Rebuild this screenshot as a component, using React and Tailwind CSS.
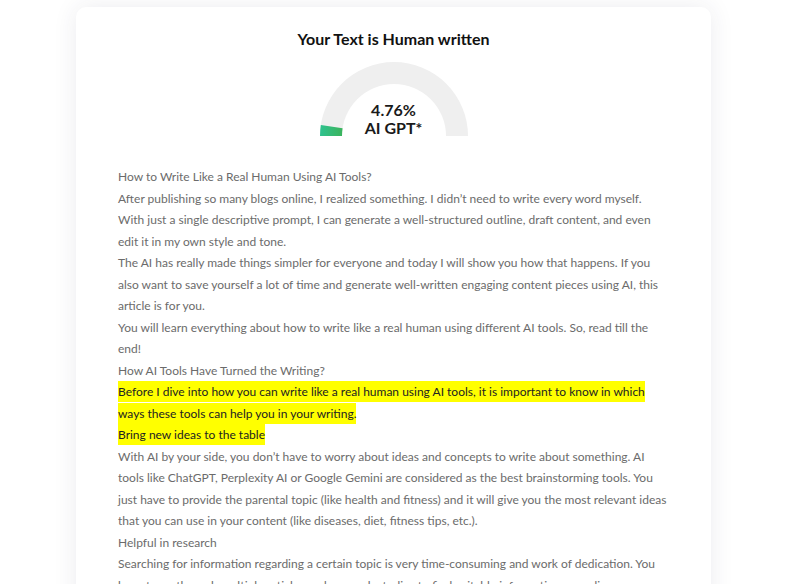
const paragraphs = [
  { text: "How to Write Like a Real Human Using AI Tools?" },
  {
    text: "After publishing so many blogs online, I realized something. I didn’t need to write every word myself. With just a single descriptive prompt, I can generate a well-structured outline, draft content, and even edit it in my own style and tone.",
  },
  {
    text: "The AI has really made things simpler for everyone and today I will show you how that happens. If you also want to save yourself a lot of time and generate well-written engaging content pieces using AI, this article is for you.",
  },
  {
    text: "You will learn everything about how to write like a real human using different AI tools. So, read till the end!",
  },
  { text: "How AI Tools Have Turned the Writing?" },
  {
    text: "Before I dive into how you can write like a real human using AI tools, it is important to know in which ways these tools can help you in your writing.",
    highlight: true,
  },
  { text: "Bring new ideas to the table", highlight: true },
  {
    text: "With AI by your side, you don’t have to worry about ideas and concepts to write about something. AI tools like ChatGPT, Perplexity AI or Google Gemini are considered as the best brainstorming tools. You just have to provide the parental topic (like health and fitness) and it will give you the most relevant ideas that you can use in your content (like diseases, diet, fitness tips, etc.).",
  },
  { text: "Helpful in research" },
  {
    text: "Searching for information regarding a certain topic is very time-consuming and work of dedication. You have to go through multiple articles and research studies to find suitable information regarding your topic.",
  },
];

// half circle gauge, value in percent
const Gauge = ({ value }) => {
  const R = 74;
  const r = 52;
  const cx = 74;
  const cy = 74;
  const a = Math.PI * (1 - value / 100);
  const arc = `M ${cx - R} ${cy} A ${R} ${R} 0 0 1 ${cx + R * Math.cos(a)} ${cy - R * Math.sin(a)} L ${cx + r * Math.cos(a)} ${cy - r * Math.sin(a)} A ${r} ${r} 0 0 0 ${cx - r} ${cy} Z`;
  const track = `M ${cx - R} ${cy} A ${R} ${R} 0 0 1 ${cx + R} ${cy} L ${cx + r} ${cy} A ${r} ${r} 0 0 0 ${cx - r} ${cy} Z`;

  return (
    <div className="relative w-[148px] h-[74px]">
      <svg width="148" height="74" viewBox="0 0 148 74">
        <defs>
          <linearGradient id="g" x1="0" y1="0" x2="1" y2="0">
            <stop offset="0" stopColor="#2ec28f" />
            <stop offset="1" stopColor="#3bb35c" />
          </linearGradient>
        </defs>
        <path d={track} fill="#efefef" />
        <path d={arc} fill="url(#g)" />
      </svg>
      <div className="absolute inset-x-0 top-[39px] flex flex-col items-center text-[16px] font-bold leading-[18px] text-[#1a1a1a]">
        <span>{value}%</span>
        <span>AI GPT*</span>
      </div>
    </div>
  );
};

export default function App() {
  return (
    <div
      className="min-h-[584px] bg-white px-[76px] pt-[7px] overflow-hidden"
      style={{ fontFamily: "Lato, 'Noto Sans', sans-serif" }}
    >
      <div className="w-[635px] rounded-[10px] bg-white shadow-[0_0_24px_rgba(40,40,80,0.09)] px-[42px] pt-[22px] pb-6">
        <h1 className="text-center text-[16px] font-bold text-[#111] leading-[20px]">
          Your Text is Human written
        </h1>
        <div className="flex justify-center mt-[13px]">
          <Gauge value={4.76} />
        </div>
        <div className="mt-[30px] text-[12px] leading-[21.5px] text-[#6b6b6b]">
          {paragraphs.map((p, i) => (
            <p key={i}>
              {p.highlight ? (
                <span className="bg-[#ffff00] text-[#222] py-[3px]">{p.text}</span>
              ) : (
                p.text
              )}
            </p>
          ))}
        </div>
      </div>
    </div>
  );
}
